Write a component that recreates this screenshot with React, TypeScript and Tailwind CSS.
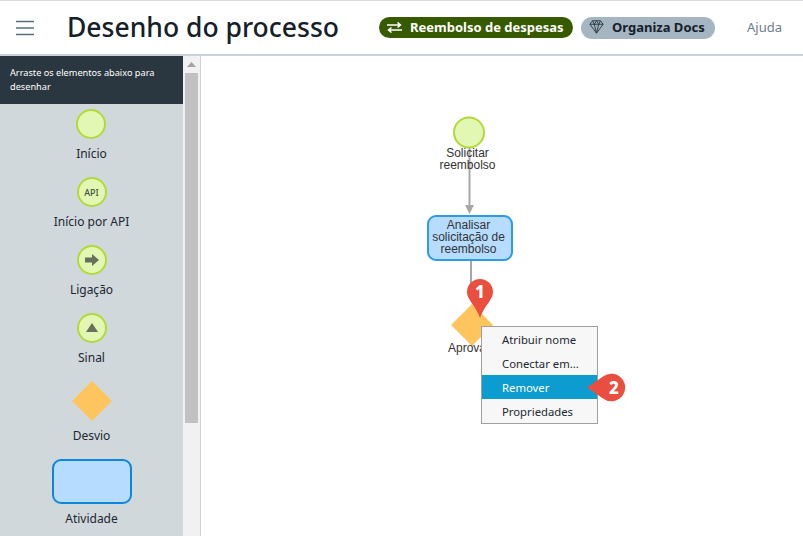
import React from 'react';

const uiFont = "font-['Noto_Sans',sans-serif]";

const Palette = ({ label, children }: { label: string; children: React.ReactNode }) => (
  <div className="flex flex-col items-center gap-[6px]">
    {children}
    <span className="text-[12px] leading-[18px] text-[#1c2730]">{label}</span>
  </div>
);

const StartEvent = ({ children }: { children?: React.ReactNode }) => (
  <div className="flex h-[30px] w-[30px] items-center justify-center rounded-full border-2 border-[#b2d93b] bg-[#e2f7b3]">
    {children}
  </div>
);

const Sidebar = () => (
  <aside className="flex h-full w-[201px] shrink-0 border-r border-[#c8d3dc] bg-[#f1f1f1]">
    <div className="flex h-full w-[183px] flex-col bg-[#d0d8dc]">
      <div className="h-[48px] bg-[#2b3740] px-[10px] pt-[10px] text-[9.2px] leading-[14px] text-white">
        Arraste os elementos abaixo para desenhar
      </div>
      <div className="flex flex-col items-center gap-[14px] pt-[5px]">
        <Palette label="Início"><StartEvent /></Palette>
        <Palette label="Início por API">
          <StartEvent><span className="text-[9px] font-medium leading-none text-[#44503a]">API</span></StartEvent>
        </Palette>
        <Palette label="Ligação">
          <StartEvent>
            <svg width="16" height="14" viewBox="0 0 16 14"><path d="M1 4.500h7V1l7 6-7 6V9.500H1z" fill="#66705a" /></svg>
          </StartEvent>
        </Palette>
        <Palette label="Sinal">
          <StartEvent>
            <svg width="14" height="12" viewBox="0 0 14 12"><path d="M7 1l6 9H1z" fill="#66705a" /></svg>
          </StartEvent>
        </Palette>
        <Palette label="Desvio">
          <svg width="40" height="40" viewBox="0 0 40 40"><path d="M20 0l20 20-20 20L0 20z" fill="#fec55e" /></svg>
        </Palette>
        <Palette label="Atividade">
          <div className="h-[45px] w-[80px] rounded-[9px] border-2 border-[#0f85e0] bg-[#b6dcff]" />
        </Palette>
      </div>
    </div>
    <div className="flex w-[17px] flex-col items-center">
      <svg className="mt-[6px]" width="9" height="5" viewBox="0 0 9 5"><path d="M4.500 0L9 5H0z" fill="#a3a3a3" /></svg>
      <div className="mt-[6px] h-[350px] w-[13px] bg-[#c1c1c1]" />
    </div>
  </aside>
);

const Canvas = () => (
  <main className="relative h-full flex-1 overflow-hidden bg-white">
    <svg className="absolute inset-0" width="602" height="480">
      <circle cx="268" cy="76.500" r="15" fill="#e2f7b3" stroke="#b2d93b" strokeWidth="2" />
      <path d="M268.500 92V152" stroke="#a6a6a6" strokeWidth="2" />
      <path d="M264 149h9l-4.500 9z" fill="#a6a6a6" />
      <path d="M270 205V232" stroke="#a6a6a6" strokeWidth="2" />
      <path d="M271 248l21 21-21 21-21-21z" fill="#fec55e" />
    </svg>
    <div className="absolute left-[236px] top-[91px] w-[61px] text-center font-['Liberation_Sans',sans-serif] text-[12px] leading-[12px] text-[#333]">
      Solicitar reembolso
    </div>
    <div className="absolute left-[226px] top-[159px] flex h-[46px] w-[86px] items-center justify-center rounded-[9px] border-2 border-[#2d9be8] bg-[#b6dcff] pb-[2px] pr-[3px] text-center font-['Liberation_Sans',sans-serif] text-[12px] leading-[12px] text-[#333]">
      <span>Analisar<br />solicitação de<br />reembolso</span>
    </div>
    <div className="absolute left-[247px] top-[286px] font-['Liberation_Sans',sans-serif] text-[12px] leading-[12px] text-[#333]">
      Aprovar
    </div>

    <div className="absolute left-[280px] top-[270px] w-[117px] border border-[#a0a0a0] bg-[#f7f7f7] text-[11.300px] text-[#1c2730]">
      <div className="h-[24px] pl-[20px] pt-[1px] leading-[24px]">Atribuir nome</div>
      <div className="h-[24px] pl-[20px] pt-[1px] leading-[24px]">Conectar em...</div>
      <div className="h-[24px] bg-[#0c9ccf] pl-[20px] pt-[1px] leading-[24px] text-white">Remover</div>
      <div className="h-[24px] pl-[20px] pt-[1px] leading-[24px]">Propriedades</div>
    </div>

    <svg className="absolute left-[265px] top-[223px]" width="28" height="42" viewBox="0 0 28 42">
      <path d="M14 0a13 13 0 0 1 13 13c0 8-9 14-13 26C10 27 1 21 1 13A13 13 0 0 1 14 0z" fill="#e94e3f" />
    </svg>
    <span className="absolute left-[265px] top-[224px] w-[28px] text-center text-[17px] font-extrabold leading-[24px] text-white">1</span>

    <div className="absolute left-[385px] top-[317px] h-[29px] w-[42px]">
      <svg width="42" height="29" viewBox="0 0 42 29">
        <path d="M1 14.500L17 3.500A13.800 13.800 0 1 1 17 25.500z" fill="#e94e3f" />
      </svg>
      <span className="absolute left-[15px] top-0 w-[26px] text-center text-[17px] font-extrabold leading-[29px] text-white">2</span>
    </div>
  </main>
);

export default function App() {
  return (
    <div className={`flex h-[536px] w-[803px] flex-col overflow-hidden bg-white ${uiFont}`}>
      <header className="flex h-[56px] shrink-0 items-center border-b-2 border-t border-b-[#c8d3dc] border-t-[#d9dde1] bg-white">
        <svg className="ml-[16px]" width="18" height="16" viewBox="0 0 18 16" fill="none" stroke="#54707f" strokeWidth="1.500">
          <path d="M0 1.500h18M0 8h18M0 14.500h18" />
        </svg>
        <h1 className="ml-[33px] text-[26.500px] font-medium leading-none text-[#15202a]">Desenho do processo</h1>
        <div className="ml-[40px] flex h-[21px] w-[194px] items-center gap-[8px] rounded-full bg-[#375a00] px-[8px] text-[13px] font-bold text-white">
          <svg width="15" height="11" viewBox="0 0 15 11" fill="none" stroke="#fff" strokeWidth="1.500">
            <path d="M0 3h13M10.500 .500L13.500 3l-3 2.500M15 8H2M4.500 5.500L1.500 8l3 2.500" />
          </svg>
          <span>Reembolso de despesas</span>
        </div>
        <div className="ml-[8px] flex h-[22px] w-[134px] items-center gap-[8px] rounded-full bg-[#a5b5c1] px-[8px] text-[13px] font-bold text-[#15202a]">
          <svg className="-mt-[3px]" width="15" height="15" viewBox="0 0 17 17" fill="none" stroke="#26323a" strokeWidth="1">
            <path d="M4 2h9l3 4-7.500 10L1 6z" />
            <path d="M1 6h15M6 6l2.500 10L11 6M4 2l2 4 2.500-4 2.500 4 2-4" />
          </svg>
          <span>Organiza Docs</span>
        </div>
        <span className="ml-[32px] text-[13px] text-[#6d7c88]">Ajuda</span>
      </header>
      <div className="flex min-h-0 flex-1">
        <Sidebar />
        <Canvas />
      </div>
    </div>
  );
}
